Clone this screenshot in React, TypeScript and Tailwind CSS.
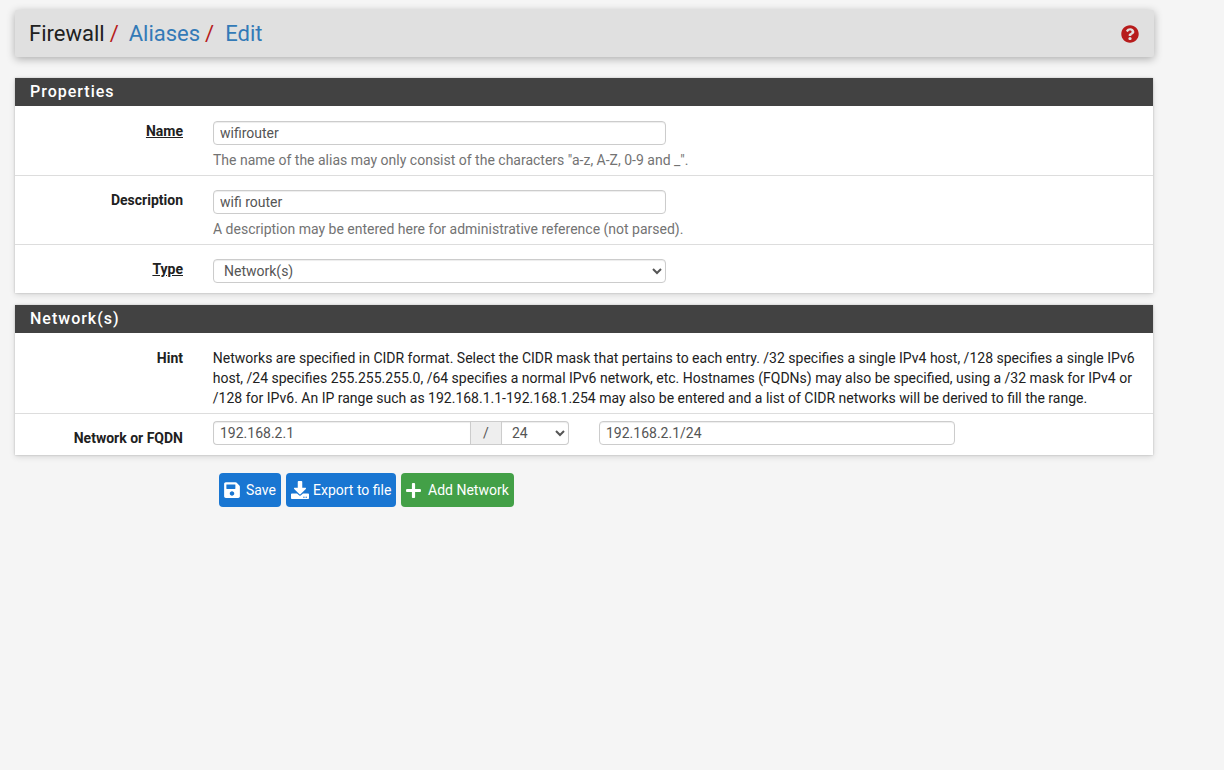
import { FaSave, FaDownload, FaPlus, FaQuestionCircle } from "react-icons/fa";

const inputCls =
  "h-6 rounded-[4px] border border-[#cccccc] bg-white px-[6px] text-[14px] leading-[20px] text-[#555555] outline-none shadow-[inset_0_1px_1px_rgba(0,0,0,0.075)]";

const panelCls = "w-[1138px] bg-white shadow-[0_0_2px_rgba(0,0,0,0.2),0_2px_6px_rgba(0,0,0,0.12)]";

function Row({
  label,
  underline,
  children,
  cls,
  labelCls,
}: {
  label: string;
  underline?: boolean;
  children: React.ReactNode;
  cls: string;
  labelCls?: string;
}) {
  return (
    <div className={`flex border-b border-[#dddddd] last:border-b-0 ${cls}`}>
      <div className={`w-[168px] shrink-0 text-right text-[14px] leading-[20px] font-bold text-[#212121] ${labelCls ?? ""}`}>
        <span className={underline ? "underline" : ""}>{label}</span>
      </div>
      <div className="ml-[30px] min-w-0 flex-1 pr-[15px]">{children}</div>
    </div>
  );
}

function Heading({ children }: { children: React.ReactNode }) {
  return (
    <div className="h-[28px] bg-[#424242] pl-[15px] text-[16px] leading-[27px] font-medium tracking-[1px] text-white">
      {children}
    </div>
  );
}

function Btn({ color, icon, label, width }: { color: string; icon: React.ReactNode; label: string; width: string }) {
  return (
    <button className={`flex h-[34px] items-center rounded-[4px] pl-[4px] text-[14px] text-white ${color} ${width}`}>
      {icon}
      {label}
    </button>
  );
}

export default function App() {
  return (
    <div className="min-h-[770px] bg-[#f5f5f5] pt-[10px] pl-[15px] font-['Roboto',sans-serif] text-[14px] text-[#212121]">
      <div className="flex h-[47px] w-[1139px] items-center justify-between rounded-[2px] bg-[#e0e0e0] pr-[15px] pl-[14px] text-[22px] shadow-[0_2px_8px_rgba(0,0,0,0.3)]">
        <div className="flex items-center leading-[30px]">
          <span>Firewall</span>
          <span className="ml-[5px] text-[#b71c1c]">/</span>
          <span className="ml-[10px] text-[#337ab7]">Aliases</span>
          <span className="ml-[5px] text-[#b71c1c]">/</span>
          <span className="ml-[11px] text-[#337ab7]">Edit</span>
        </div>
        <FaQuestionCircle className="h-[18px] w-[18px] text-[#b71c1c]" />
      </div>

      <div className={`mt-[21px] ${panelCls}`}>
        <Heading>Properties</Heading>
        <Row label="Name" underline cls="h-[70px] pt-[15px]">
          <input className={`${inputCls} block w-[453px]`} defaultValue="wifirouter" readOnly />
          <div className="mt-[5px] leading-[20px] text-[#737373]">
            The name of the alias may only consist of the characters "a-z, A-Z, 0-9 and _".
          </div>
        </Row>
        <Row label="Description" cls="h-[69px] pt-[14px]">
          <input className={`${inputCls} block w-[453px]`} defaultValue="wifi router" readOnly />
          <div className="mt-[5px] leading-[20px] text-[#737373]">
            A description may be entered here for administrative reference (not parsed).
          </div>
        </Row>
        <Row label="Type" underline cls="h-[48px] pt-[14px]">
          <select className={`${inputCls} block w-[453px]`} defaultValue="n">
            <option value="n">Network(s)</option>
          </select>
        </Row>
      </div>

      <div className={`mt-[12px] ${panelCls}`}>
        <Heading>Network(s)</Heading>
        <Row label="Hint" cls="h-[81px] pt-[15px]">
          <div className="-ml-[0.2px] leading-[20px]">
            Networks are specified in CIDR format. Select the CIDR mask that pertains to each entry. /32 specifies a single IPv4 host, /128 specifies a single IPv6 host, /24 specifies 255.255.255.0, /64 specifies a normal IPv6 network, etc. Hostnames (FQDNs) may also be specified, using a /32 mask for IPv4 or /128 for IPv6. An IP range such as 192.168.1.1-192.168.1.254 may also be entered and a list of CIDR networks will be derived to fill the range.
          </div>
        </Row>
        <Row label="Network or FQDN" cls="h-[41px] pt-[7px]" labelCls="mt-[7px]">
          <div className="flex">
            <input className={`${inputCls} w-[257px] rounded-r-none border-r-0`} defaultValue="192.168.2.1" readOnly />
            <div className="flex h-6 w-[32px] items-center justify-center border border-[#cccccc] bg-[#eeeeee] text-[#555555]">/</div>
            <select className={`${inputCls} w-[67px] rounded-l-none border-l-0`} defaultValue="24">
              <option value="24">24</option>
            </select>
            <input className={`${inputCls} ml-[30px] w-[356px]`} defaultValue="192.168.2.1/24" readOnly />
          </div>
        </Row>
      </div>

      <div className="mt-[18px] ml-[204px] flex gap-[5px]">
        <Btn color="bg-[#1976d2]" width="w-[62px]" label="Save" icon={<FaSave className="mr-[5px] h-[18px] w-[18px]" />} />
        <Btn color="bg-[#1976d2]" width="w-[110px]" label="Export to file" icon={<FaDownload className="ml-[1px] mr-[4px] h-[18px] w-[18px]" />} />
        <Btn color="bg-[#43a047]" width="w-[113px]" label="Add Network" icon={<FaPlus className="mr-[6px] h-[17px] w-[17px]" />} />
      </div>
    </div>
  );
}
